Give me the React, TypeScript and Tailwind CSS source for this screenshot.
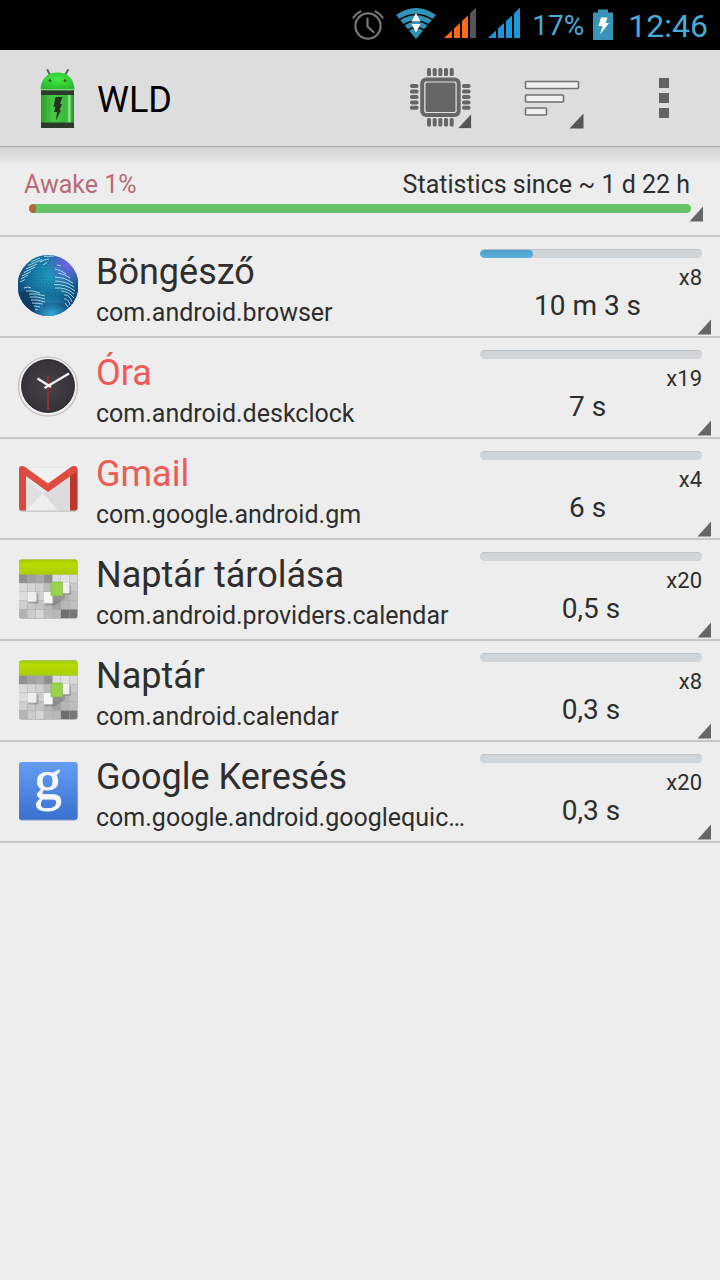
import { useState } from 'react';
import type { ReactNode } from 'react';

type AppRow = {
  icon: ReactNode;
  name: string;
  pkg: string;
  time: string;
  count: number;
  share: number;
  alert?: boolean;
};

function AlarmIcon() {
  return (
    <svg width="36" height="36" viewBox="0 0 36 36" fill="none" stroke="#777" strokeWidth="2.2" strokeLinecap="round">
      <circle cx="16" cy="19" r="12.6" />
      <path d="M15.5 11.5V19.5L21.5 25M1.5 10.5Q4 6.5 8.5 4.5M23.5 4.5Q28 6.5 30.5 10.5" />
    </svg>
  );
}

function WifiIcon() {
  return (
    <svg width="40" height="36" viewBox="0 0 40 36">
      <path d="M0 8Q20 -6 40 8L20 32Z" fill="#2f93b8" />
      <path d="M2 13.5Q20 1.5 38 13.5M6.5 18.5Q20 9.5 33.5 18.5M11 23.5Q20 17.5 29 23.5" fill="none" stroke="#000" strokeWidth="1.7" />
      <path d="M20 6L24.5 14.5H15.5ZM15.5 17H24.5L20 25.5Z" fill="#fff" />
    </svg>
  );
}

function SignalIcon({ color, bars }: { color: string; bars: number }) {
  const off = '#555';
  return (
    <svg width="36" height="36" viewBox="0 0 36 36">
      <path d="M0 31L8 23.5V31Z" fill={bars > 0 ? color : off} />
      <path d="M10 31V21.5L16 16V31Z" fill={bars > 1 ? color : off} />
      <path d="M18 31V14L24 8.5V31Z" fill={bars > 2 ? color : off} />
      <path d="M26 31V6.5L32 0.5V31Z" fill={bars > 3 ? color : off} />
    </svg>
  );
}

function BatteryIcon() {
  return (
    <svg width="28" height="36" viewBox="0 0 28 36">
      <path d="M6 2.5H16V5.5H21V33H1V5.5H6Z" fill="#3a94b8" />
      <path d="M9 10.5H15.5L13.5 16H17L8 27.5L10.5 19H6.5Z" fill="#fff" />
    </svg>
  );
}

function DroidIcon() {
  return (
    <svg width="48" height="64" viewBox="0 0 48 64">
      <defs>
        <linearGradient id="droid" x1="0" x2="1">
          <stop offset="0" stopColor="#2b9e2b" />
          <stop offset="0.35" stopColor="#45c745" />
          <stop offset="0.8" stopColor="#3cb83c" />
          <stop offset="0.85" stopColor="#a4eea4" />
          <stop offset="0.92" stopColor="#39b139" />
          <stop offset="1" stopColor="#248824" />
        </linearGradient>
        <radialGradient id="droidHead" cx="0.5" cy="0.4" r="0.6">
          <stop offset="0" stopColor="#43ea43" />
          <stop offset="1" stopColor="#2cbb30" />
        </radialGradient>
      </defs>
      <path d="M14.5 4L17.5 10M35 4L31.500 10" stroke="#4f6a4f" strokeWidth="2" strokeLinecap="round" />
      <path d="M7.5 23.500C8 12 15 6.5 24.5 6.5S41 12 41.5 23.500Z" fill="url(#droidHead)" />
      <circle cx="17" cy="14.5" r="1.3" fill="#145214" />
      <circle cx="32" cy="14.5" r="1.3" fill="#145214" />
      <rect x="8" y="24" width="33" height="38" fill="url(#droid)" />
      <rect x="8" y="24.5" width="33" height="4.5" fill="#2c3a2c" />
      <rect x="8" y="56.5" width="33" height="5.5" fill="#2c3a2c" />
      <path d="M22.5 31H29.500L27 38H29L26.500 44H28L23 54.5L24 46H21L22.5 41H20.500Z" fill="#223322" />
    </svg>
  );
}

function ChipIcon() {
  return (
    <svg width="112" height="96" viewBox="0 0 112 96" fill="#666">
      {[45, 50.7, 56.3, 62, 67.7].map((x) => (
        <g key={x}>
          <rect x={x - 2} y="18" width="4" height="8" rx="1.5" />
          <rect x={x - 2} y="68" width="4" height="8.5" rx="1.5" />
        </g>
      ))}
      {[36, 41.5, 47, 52.4, 57.8].map((y) => (
        <g key={y}>
          <rect x="26" y={y - 2} width="8.5" height="4" rx="1.7" />
          <rect x="78" y={y - 2} width="8.5" height="4" rx="1.7" />
        </g>
      ))}
      <rect x="38.2" y="29.5" width="36.5" height="35.500" rx="4" fill="#e2e2e2" stroke="#666" strokeWidth="4" />
      <rect x="41.5" y="32.5" width="30" height="29.5" rx="1.5" />
      <path d="M73.5 78.5H87.5V63.5Z" fill="#555" stroke="#ddd" strokeWidth="0.8" />
    </svg>
  );
}

function SortIcon() {
  return (
    <svg width="112" height="96" viewBox="0 0 112 96">
      <g fill="#f0f0f0" stroke="#707070" strokeWidth="1.6">
        <rect x="29.5" y="31.5" width="53" height="7" rx="1" />
        <rect x="29.5" y="45" width="38" height="7" rx="1" />
        <rect x="29.5" y="58" width="21" height="7" rx="1" />
      </g>
      <path d="M73.5 78.5H87.5V63.5Z" fill="#555" />
    </svg>
  );
}

function OverflowIcon() {
  return (
    <svg width="112" height="96" viewBox="0 0 112 96" fill="#636363">
      <rect x="51" y="28" width="10" height="10" />
      <rect x="51" y="43" width="10" height="10" />
      <rect x="51" y="58" width="10" height="10" />
    </svg>
  );
}

function Corner({ className }: { className: string }) {
  return (
    <svg width="15" height="16" viewBox="0 0 15 16" className={`absolute ${className}`}>
      <path d="M0.5 15.5H14V0.5Z" fill="#666" />
    </svg>
  );
}

function GlobeIcon() {
  const dots = [];
  for (let y = 4; y < 60; y += 3) {
    for (let x = 4 + (y % 2); x < 60; x += 3) dots.push([x, y]);
  }
  return (
    <svg width="60" height="64" viewBox="0 0 60 64">
      <defs>
        <radialGradient id="globe" cx="0.52" cy="0.35" r="0.62">
          <stop offset="0" stopColor="#1f9fc4" />
          <stop offset="0.55" stopColor="#16709d" />
          <stop offset="1" stopColor="#123f73" />
        </radialGradient>
        <radialGradient id="globeViolet" cx="0.85" cy="0.15" r="0.38">
          <stop offset="0" stopColor="#7a62e8" />
          <stop offset="1" stopColor="#7a62e8" stopOpacity="0" />
        </radialGradient>
        <radialGradient id="globeGlow" cx="0.56" cy="1" r="0.35">
          <stop offset="0" stopColor="#35b0e0" />
          <stop offset="1" stopColor="#35b0e0" stopOpacity="0" />
        </radialGradient>
        <clipPath id="globeClip"><circle cx="30" cy="32.500" r="30.5" /></clipPath>
      </defs>
      <g clipPath="url(#globeClip)">
        <rect width="60" height="64" fill="url(#globe)" />
        {dots.map(([x, y]) => (
          <circle key={`${x}-${y}`} cx={x} cy={y} r="0.7" fill="#0c4d78" opacity="0.55" />
        ))}
        <path d="M0 40L10 36L18 46L16 60L4 52Z" fill="#0b3154" opacity="0.55" />
        <path d="M24 50H44L48 54L36 57H26Z" fill="#0b3154" opacity="0.6" />
        <rect width="60" height="64" fill="url(#globeViolet)" />
        <rect width="60" height="64" fill="url(#globeGlow)" />
        <g fill="none" stroke="#b4e2ee" strokeWidth="0.9">
          <path d="M13 9L22 5M10 12.5L24 6.5M8 16L19 11M6 19.5L17 14M4 23L13 18.5M3 26L10 22M2 29L7 26.5" />
          <path d="M22 9Q27 6 31 6M25 12L29 9.5M26 3.5L36 3" />
          <path d="M39 12L43 13M37 16Q43 17 48 21M40 20Q47 21 52 25M37 24Q47 24 55 30M37 28Q48 28 56 34M36 31.5Q48 31 57 38M37 35Q48 34 56 41M43 38Q50 38 56 45M46 42Q51 41 54 49M46 46Q50 45 52 52M47 50L50 54" />
          <path d="M6 35Q10 33 13 35M8 38Q15 37 22 40M11 41Q18 40 27 43M12 44Q18 43 27 46M13 47Q19 46 27 49M14 50Q19 50 25 51M16 53L22 54M17 56L20 57" />
        </g>
      </g>
    </svg>
  );
}

function ClockIcon() {
  return (
    <svg width="60" height="64" viewBox="0 0 60 64">
      <defs>
        <radialGradient id="clockFace">
          <stop offset="0" stopColor="#474349" />
          <stop offset="1" stopColor="#343138" />
        </radialGradient>
      </defs>
      <circle cx="30" cy="32.5" r="29.5" fill="#f0eeee" stroke="#bdbabb" strokeWidth="1.2" />
      <circle cx="30" cy="32" r="26.5" fill="url(#clockFace)" stroke="#221f25" strokeWidth="0.8" />
      <path d="M30 22V56" stroke="#8e2f31" strokeWidth="2" />
      <path d="M19.5 24.5L33 33" stroke="#f3f3f3" strokeWidth="2.4" />
      <path d="M26.5 34L51 19.5" stroke="#f3f3f3" strokeWidth="2.2" />
    </svg>
  );
}

function GmailIcon() {
  return (
    <svg width="60" height="64" viewBox="0 0 60 64">
      <g>
        <rect x="1" y="12" width="58.500" height="44.500" rx="3" fill="#a9a9a9" />
        <rect x="1" y="11" width="58.500" height="44.500" rx="3" fill="#e9e9e9" />
        <path d="M8 13H52L30 29Z" fill="#f1f1f1" />
        <path d="M8 55.500L25 38L40 55.500Z" fill="#eeeeee" />
        <path d="M30 37L52 22V55.500H40L25 38Z" fill="#dcdcdc" />
        <path d="M8 55.500V24L25 38Z" fill="#e0e0e0" />
        <path d="M1 14V52.500Q1 55.500 4 55.500H8V16Z" fill="#d64a3f" />
        <path d="M59.500 14V52.500Q59.500 55.500 56.500 55.500H52V16Z" fill="#bf362d" />
        <path d="M1 14Q1 11 4 11Q5.500 11 7 12L30 28.500L53 12Q54.500 11 56 11Q59.500 11 59.500 14Q59.500 16 57.500 17.500L30 37L3 17.500Q1 16 1 14Z" fill="#df4b40" />
      </g>
    </svg>
  );
}

const cells = [
  ['#8f8f8f', '#a0a0a0', '#a8a8a8', '#8f8f8f', '#dedede', '#e2e2e2', '#d8d8d8'],
  ['#dadada', '#d6d6d6', '#d0d0d0', '#bcbcbc', '#b4b4b4', '#c0c0c0', '#cacaca'],
  ['#dedede', '#cacaca', '#d0d0d0', '#c8c8c8', '#aeaeae', '#b3b3b3', '#c1c1c1'],
  ['#cfcfcf', '#c8c8c8', '#c4c4c4', '#b8b8b8', '#a4a4a4', '#b6b6b6', '#bebebe'],
  ['#b4b4b4', '#cccccc', '#d6d6d6', '#bcbcbc', '#b8b8b8', '#6f6f6f', '#777777'],
];

function CalendarIcon() {
  return (
    <svg width="60" height="64" viewBox="0 0 60 64">
      <defs>
        <linearGradient id="calTop" x1="0" y1="0" x2="0" y2="1">
          <stop offset="0" stopColor="#9dc403" />
          <stop offset="0.3" stopColor="#b5dc00" />
          <stop offset="1" stopColor="#a9cf04" />
        </linearGradient>
        <clipPath id="calClip"><rect x="1" y="3.500" width="58.500" height="58.500" rx="2.5" /></clipPath>
      </defs>
      <rect x="1" y="4" width="58.500" height="59" rx="3" fill="#bdbdbd" />
      <g clipPath="url(#calClip)">
        <rect x="1" y="3" width="59" height="60" fill="#a6a6a6" />
        {cells.map((row, r) =>
          row.map((fill, c) => (
            <rect key={`${r}-${c}`} x={1 + c * 8.4} y={18.5 + r * 8.8} width="8" height="8.4" fill={fill} />
          )),
        )}
        <rect x="1" y="3" width="59" height="15.500" fill="url(#calTop)" />
      </g>
      <path d="M9.500 45.500H18.500V36L20.500 38V47.500H11.500ZM26 47.500H34.500V40H44.500V27L47 29V42.500L36.500 49.500H28ZM45 37.500H51.500V28L53 30V39H47Z" fill="#666" opacity="0.4" />
      <rect x="9.500" y="36" width="8.800" height="9.500" fill="#efefef" />
      <rect x="25.800" y="36" width="8.800" height="11.200" fill="#f6f6f6" />
      <rect x="43" y="27" width="8.300" height="10.200" fill="#f0f0f0" />
      <rect x="33" y="26" width="11.500" height="13.800" rx="0.5" fill="#9ad24c" stroke="#86bd42" strokeWidth="0.7" />
    </svg>
  );
}

function GoogleIcon() {
  return (
    <svg width="60" height="64" viewBox="0 0 60 64" className="overflow-visible">
      <defs>
        <linearGradient id="google" x1="0" y1="0" x2="0" y2="1">
          <stop offset="0" stopColor="#659df2" />
          <stop offset="1" stopColor="#3a70cf" />
        </linearGradient>
      </defs>
      <rect x="1" y="4" width="58.5" height="58.500" rx="3" fill="#7c98c9" />
      <rect x="1" y="4" width="58.5" height="57.5" rx="3" fill="url(#google)" />
      <text x="30" y="41" textAnchor="middle" fontFamily="Liberation Serif, serif" fontSize="56" fill="#f4f7fc" stroke="#f4f7fc" strokeWidth="0.800">g</text>
    </svg>
  );
}

const rows: AppRow[] = [
  // minute and whole-second readings keep the space left after their unit
  { icon: <GlobeIcon />, name: 'Böngésző', pkg: 'com.android.browser', time: '10 m 3 s ', count: 8, share: 24 },
  { icon: <ClockIcon />, name: 'Óra', pkg: 'com.android.deskclock', time: '7 s ', count: 19, share: 0, alert: true },
  { icon: <GmailIcon />, name: 'Gmail', pkg: 'com.google.android.gm', time: '6 s ', count: 4, share: 0, alert: true },
  { icon: <CalendarIcon />, name: 'Naptár tárolása', pkg: 'com.android.providers.calendar', time: '0,5 s', count: 20, share: 0 },
  { icon: <CalendarIcon />, name: 'Naptár', pkg: 'com.android.calendar', time: '0,3 s', count: 8, share: 0 },
  { icon: <GoogleIcon />, name: 'Google Keresés', pkg: 'com.google.android.googlequic…', time: '0,3 s', count: 20, share: 0 },
];

function StatusBar() {
  return (
    <div className="flex h-[50px] items-center justify-end gap-2 bg-black pr-3 text-[#48acd8]">
      <AlarmIcon />
      <WifiIcon />
      <SignalIcon color="#ff6a13" bars={3} />
      <SignalIcon color="#1d97dc" bars={4} />
      <span className="pt-0.5 text-[28px] leading-8">17%</span>
      <BatteryIcon />
      <span className="pt-0.5 text-[32px] leading-8">12:46</span>
    </div>
  );
}

function ActionBar() {
  return (
    <header className="flex items-center border-b border-[#a8a8a8] bg-[#dddddd]">
      <div className="flex flex-1 items-center gap-4 pl-[33px]">
        <DroidIcon />
        <h1 className="pt-1 text-[36px] leading-[42px] text-black">WLD</h1>
      </div>
      <button aria-label="Wakelock type" className="w-28 cursor-pointer"><ChipIcon /></button>
      <button aria-label="Sort" className="w-28 cursor-pointer"><SortIcon /></button>
      <button aria-label="More options" className="w-28 cursor-pointer"><OverflowIcon /></button>
    </header>
  );
}

function Summary() {
  return (
    <button className="relative block w-full cursor-pointer border-b-2 border-[#c6c6c6] bg-linear-to-b from-[#d0d0d0] to-[#ededed] to-20% pt-6 pb-[22px] text-left">
      <span className="flex justify-between pr-[30px] pl-6 text-[25px] leading-7">
        <span className="text-[#b96b78]">Awake 1%</span>
        <span>Statistics since ~ 1 d 22 h</span>
      </span>
      <span className="mx-[29px] mt-[5px] block h-[9px] overflow-hidden rounded-full bg-[#66c266]">
        <span className="block h-full w-[1%] rounded-full bg-[#b0683f]" />
      </span>
      <Corner className="right-4 bottom-[13px]" />
    </button>
  );
}

function Row({ row }: { row: AppRow }) {
  return (
    <li className="border-b-2 border-[#c6c6c6]">
      <button className="relative flex h-[99px] w-full cursor-pointer items-start pr-[18px] pl-[18px] text-left">
        <span className="shrink-0 pt-4">{row.icon}</span>
        <span className="ml-[18px] flex min-w-0 flex-1 flex-col gap-1.5 pt-3.5">
          <span className={`truncate text-[36px] leading-[42px] ${row.alert ? 'text-[#ee5a55]' : ''}`}>{row.name}</span>
          <span className="truncate text-[25px] leading-7">{row.pkg}</span>
        </span>
        <span className="ml-2 flex w-[222px] shrink-0 flex-col pt-3">
          <span
            role="progressbar"
            aria-valuenow={row.share}
            className="block h-[9px] overflow-hidden rounded-full border-t border-[#bcc2c6] bg-[#d0d5d9]"
          >
            <span
              className="block h-full rounded-full bg-linear-to-b from-[#4a9fcb] to-[#5fb3da]"
              style={{ width: `${row.share}%` }}
            />
          </span>
          <span className="mt-2 text-right text-[22px] leading-6">x{row.count}</span>
          <span className="text-center text-[28px] leading-8 whitespace-pre">{row.time}</span>
        </span>
        <Corner className="right-2 bottom-px" />
      </button>
    </li>
  );
}

export default function App() {
  const [items] = useState(rows);

  return (
    <div className="min-h-screen bg-[#ededed] font-[Roboto,sans-serif] text-[#2e2e2e]">
      <StatusBar />
      <ActionBar />
      <main>
        <Summary />
        <ul>
          {items.map((row) => (
            <Row key={row.pkg} row={row} />
          ))}
        </ul>
      </main>
    </div>
  );
}
